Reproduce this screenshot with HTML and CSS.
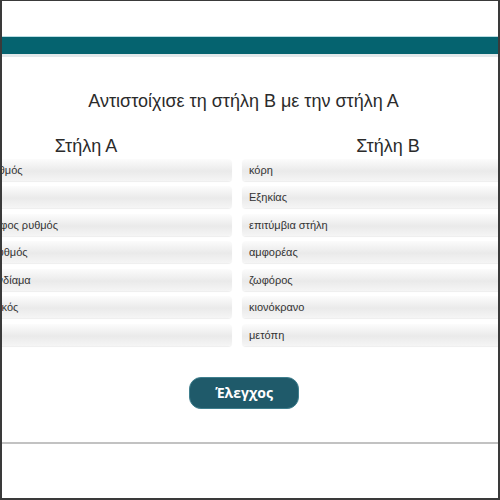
FILE: index.html
```html
<!DOCTYPE html>
<html lang="el">
<head>
<meta charset="utf-8">
<link rel="stylesheet" href="styles.css">
</head>
<body>
<div class="frame">
  <div class="topbar"></div>
  <h1 class="title">Αντιστοίχισε τη στήλη Β με την στήλη Α</h1>
  <div class="columns">
    <div class="col">
      <h2 class="col-head">Στήλη Α</h2>
      <div class="item">Ιωνικός ρυθμός</div>
      <div class="item">γλυπτό</div>
      <div class="item">μελανόμορφος ρυθμός</div>
      <div class="item">Δωρικός ρυθμός</div>
      <div class="item">γλυπτικό ενδίαμα</div>
      <div class="item">ύφος αρχαϊκός</div>
      <div class="item">άγαλμα</div>
    </div>
    <div class="col">
      <h2 class="col-head">Στήλη Β</h2>
      <div class="item">κόρη</div>
      <div class="item">Εξηκίας</div>
      <div class="item">επιτύμβια στήλη</div>
      <div class="item">αμφορέας</div>
      <div class="item">ζωφόρος</div>
      <div class="item">κιονόκρανο</div>
      <div class="item">μετόπη</div>
    </div>
  </div>
  <div class="actions">
    <button class="check">Έλεγχος</button>
  </div>
  <div class="rule"></div>
</div>
</body>
</html>
```
FILE: styles.css
```css
html, body {
  margin: 0;
  padding: 0;
  background: #fff;
}
.frame {
  width: 500px;
  height: 500px;
  box-sizing: border-box;
  border: 2px solid #3a3a3a;
  border-top-width: 1px;
  overflow: hidden;
  font-family: "Liberation Sans", Arial, sans-serif;
  color: #333;
  padding-top: 35px;
}
.topbar {
  height: 17px;
  background: #05636f;
  border-top: 1px solid #b9dde3;
  border-bottom: 3px solid #e2e8ea;
}
.title {
  margin: 33px 0 0;
  font-size: 18px;
  font-weight: normal;
  text-align: center;
  line-height: 22px;
  color: #2b2b2b;
  padding-right: 13px;
}
.columns {
  display: flex;
  gap: 10px;
  margin-left: -62px;
  margin-top: 24px;
}
.col {
  width: 292px;
  flex: none;
  display: flex;
  flex-direction: column;
  gap: 5.5px;
}
.col-head {
  margin: 0 0 -3px;
  font-size: 18px;
  font-weight: normal;
  text-align: center;
  line-height: 20px;
  color: #2b2b2b;
}
.item {
  height: 22px;
  line-height: 22px;
  padding: 0 7px;
  font-size: 11px;
  color: #333;
  border-radius: 4px;
  background: linear-gradient(#fcfcfc, #eaeaea 55%, #f5f5f5);
  box-shadow: 0 1px 1px rgba(0, 0, 0, 0.07);
  white-space: nowrap;
}
.actions {
  display: flex;
  justify-content: center;
  margin-top: 31px;
  padding-right: 12px;
}
.check {
  width: 110px;
  height: 32px;
  border: 1px solid #3f7f8e;
  border-radius: 12px;
  background: #1f5a6a;
  color: #fff;
  font-family: "Open Sans", "Noto Sans", sans-serif;
  font-weight: bold;
  font-size: 14px;
  padding: 0;
}
.rule {
  height: 2px;
  background: #c2c2c2;
  margin-top: 33px;
}
```
